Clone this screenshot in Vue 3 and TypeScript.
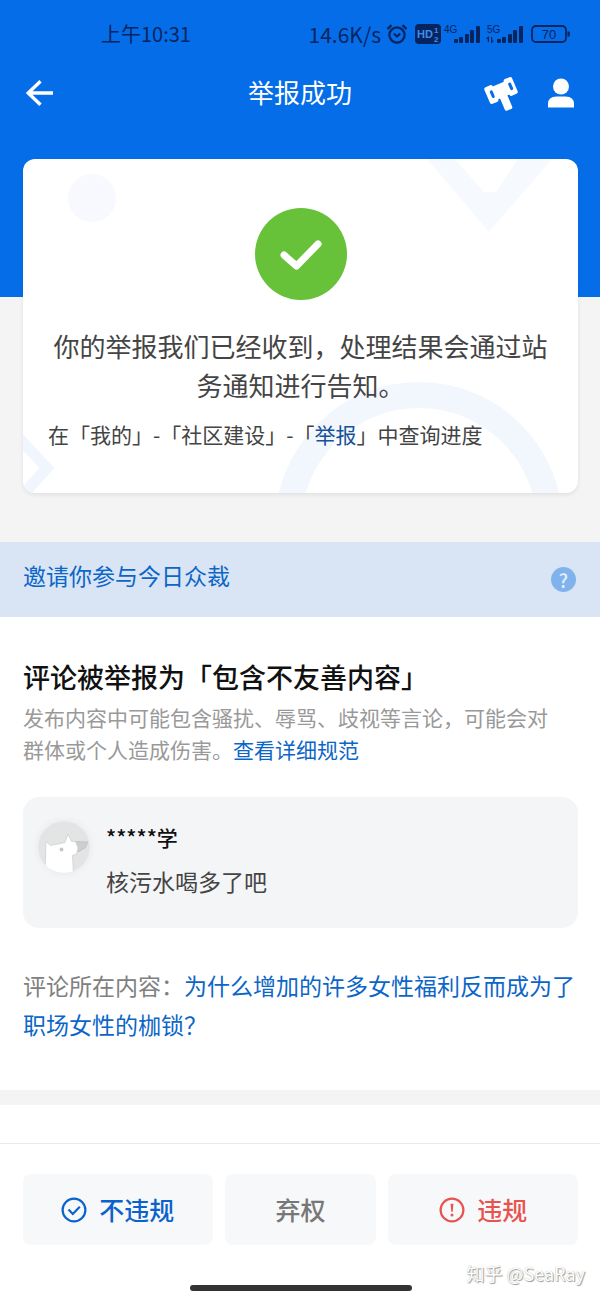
<script setup lang="ts">
const signals: { label: string; data: boolean }[] = [
  { label: '4G', data: false },
  { label: '5G', data: true },
]
</script>

<template>
  <div class="page">
    <section class="hero">
      <div class="status">
        <span class="time">上午10:31</span>
        <div class="indicators">
          <span class="speed">14.6K/s</span>
          <svg class="alarm" viewBox="0 0 22 22" width="22" height="22" fill="none" stroke="currentColor">
            <circle cx="11" cy="12" r="7.6" stroke-width="2.3" />
            <path d="M1.5 6 5.5 2.2M20.5 6 16.5 2.2" stroke-width="2.4" />
            <path d="M7.8 10.6 11 13.6 14.2 10.6" stroke-width="2" />
          </svg>
          <svg class="hd" viewBox="0 0 26 20" width="26" height="20">
            <rect x="0" y="0" width="26" height="20" rx="4" fill="currentColor" />
            <text x="2" y="14" font-size="11" font-weight="700" fill="#3f8df0">HD</text>
            <text x="19" y="9" font-size="8" font-weight="700" fill="#3f8df0">1</text>
            <text x="19" y="18" font-size="8" font-weight="700" fill="#3f8df0">2</text>
          </svg>
          <svg
            v-for="signal in signals"
            :key="signal.label"
            class="signal"
            viewBox="0 0 38 22"
            width="38"
            height="22"
            fill="currentColor"
          >
            <text x="1" y="10" font-size="10">{{ signal.label }}</text>
            <rect x="11" y="16" width="4" height="4" rx="1" />
            <rect x="16" y="14" width="4" height="6" rx="1" />
            <rect x="22" y="11" width="4" height="9" rx="1" />
            <rect x="27" y="7" width="4" height="13" rx="1" />
            <rect x="33" y="3" width="4" height="17" rx="1" />
            <path v-if="signal.data" d="M0 16 2.200 13.500H3V19H1.800V16ZM8 17.500 5.800 20H5V14H6.200V17.500Z" />
          </svg>
          <svg class="battery" viewBox="0 0 40 18" width="40" height="18">
            <rect x="1" y="1" width="34" height="16" rx="4" fill="none" stroke="currentColor" stroke-width="1.8" />
            <path d="M36.5 6.5h1.3q1 0 1 1v3q0 1-1 1h-1.3z" fill="currentColor" />
            <text x="18" y="13.5" font-size="13" text-anchor="middle" fill="currentColor">70</text>
          </svg>
        </div>
      </div>

      <header class="nav">
        <button class="icon-button" type="button" aria-label="返回">
          <svg viewBox="0 0 28 28" width="28" height="28" fill="none" stroke="#fff" stroke-width="3.400">
            <path d="M15.5 2.2 3.2 14 15.5 25.8M3.5 14H28" />
          </svg>
        </button>
        <h1>举报成功</h1>
        <div class="actions">
          <button class="icon-button" type="button" aria-label="众裁">
            <svg viewBox="0 0 36 36" width="36" height="36">
              <g transform="translate(17 15.5) rotate(-23)" fill="#fff">
                <rect x="-15" y="-9" width="9" height="18" rx="2" />
                <rect x="6" y="-9" width="9" height="18" rx="2" />
                <rect x="-8" y="-7" width="16" height="14" />
                <rect x="-4" y="4" width="8" height="17" rx="2" />
                <rect x="-11" y="-4" width="3" height="8" rx="1.500" fill="#056de8" />
                <rect x="9" y="-4" width="3" height="8" rx="1.500" fill="#056de8" />
              </g>
            </svg>
          </button>
          <button class="icon-button" type="button" aria-label="我的">
            <svg viewBox="0 0 28 30" width="28" height="30" fill="#fff">
              <circle cx="14" cy="8.5" r="8" />
              <path d="M1 29.5V26Q1 18.5 9.5 18.5H18.5Q27 18.5 27 26V29.5Z" />
            </svg>
          </button>
        </div>
      </header>

      <div class="card">
        <svg class="decor" viewBox="0 0 555 334" preserveAspectRatio="xMidYMid slice" fill="none" aria-hidden="true">
          <circle cx="69" cy="39" r="24" fill="#f8f9fe" />
          <path d="M404 0H432L461 33H473L495 0H529L466 73Z" fill="#f6f9fe" />
          <circle cx="396" cy="367" r="131" stroke="#f2f7fe" stroke-width="26" />
          <path d="M-6 277 24 309-2 338" stroke="#f0f5fe" stroke-width="11" />
        </svg>
        <svg class="success" viewBox="0 0 92 92" width="92" height="92" role="img" aria-label="成功">
          <circle cx="46" cy="46" r="46" fill="#67c23a" />
          <path d="M29 47 41.500 58 63 36" fill="none" stroke="#fff" stroke-width="7" stroke-linecap="round" stroke-linejoin="round" />
        </svg>
        <p class="result">你的举报我们已经收到，处理结果会通过站务通知进行告知。</p>
        <p class="track">在「我的」-「社区建设」-「<a href="#reports">举报</a>」中查询进度</p>
      </div>
    </section>

    <section class="banner">
      <h2>邀请你参与今日众裁</h2>
      <button class="help" type="button" aria-label="帮助">?</button>
    </section>

    <main class="case">
      <h2>评论被举报为「包含不友善内容」</h2>
      <p class="rule">
        发布内容中可能包含骚扰、辱骂、歧视等言论，可能会对群体或个人造成伤害。<a href="#rules">查看详细规范</a>
      </p>
      <article class="comment">
        <svg class="avatar" viewBox="0 0 52 52" width="52" height="52" aria-hidden="true">
          <defs>
            <clipPath id="avatar-clip"><circle cx="26" cy="26" r="26" /></clipPath>
          </defs>
          <g clip-path="url(#avatar-clip)">
            <rect width="52" height="52" fill="#e3e4e4" />
            <path d="M37 20.500 50 21 47 27 40 31Z" fill="#cdcfcf" stroke="#bfc1c1" stroke-width=".8" />
            <path
              d="M7 53 8 20.500 12.500 24.500 27 21.500 30 13 33.500 20.500H37.500L40 27 38.500 33 34.500 34.500 35.500 53Z"
              fill="#fff"
              stroke="#cfd1d1"
              stroke-width=".8"
            />
            <circle cx="23.500" cy="28.500" r="1.900" fill="#c4c6c6" />
          </g>
        </svg>
        <div>
          <strong>*****学</strong>
          <p>核污水喝多了吧</p>
        </div>
      </article>
      <p class="source">评论所在内容：<a href="#question">为什么增加的许多女性福利反而成为了职场女性的枷锁？</a></p>
    </main>

    <div class="divider"></div>

    <footer class="bottom">
      <div class="votes">
        <button class="vote ok" type="button">
          <svg viewBox="0 0 26 26" width="26" height="26" fill="none" stroke="currentColor" stroke-width="2.200">
            <circle cx="13" cy="13" r="11.400" />
            <path d="M7.500 12.500 11.800 17 18.800 9.800" />
          </svg>
          <span>不违规</span>
        </button>
        <button class="vote skip" type="button"><span>弃权</span></button>
        <button class="vote bad" type="button">
          <svg viewBox="0 0 26 26" width="26" height="26" fill="none" stroke="currentColor" stroke-width="2.200">
            <circle cx="13" cy="13" r="11.400" />
            <path d="M11.600 6.800h2.800l-.7 8h-1.400z" fill="currentColor" stroke="none" />
            <circle cx="13" cy="18" r="1.500" fill="currentColor" stroke="none" />
          </svg>
          <span>违规</span>
        </button>
      </div>
      <div class="watermark">知乎 @SeaRay</div>
      <div class="home-bar"></div>
    </footer>
  </div>
</template>

<style>
body {
  margin: 0;
  background: #fff;
}
</style>

<style scoped>
.page {
  font-family: "Noto Sans CJK SC", "Noto Sans", sans-serif;
  color: #444;
  background: #fff;
}
h1,
h2,
p {
  margin: 0;
  font-weight: 400;
}
a {
  color: #0c66c8;
  text-decoration: none;
}
button {
  border: 0;
  padding: 0;
  font-family: inherit;
  cursor: pointer;
}
.hero {
  padding-bottom: 49px;
  background: linear-gradient(#056de8, #056de8) top / 100% 297px no-repeat #f4f4f4;
}
.status {
  display: flex;
  align-items: center;
  justify-content: space-between;
  height: 40px;
  padding: 14px 29px 0 101px;
  color: #06255f;
}
.status svg {
  font-family: "Liberation Sans", Arial, sans-serif;
}
.time,
.speed {
  line-height: 40px;
}
.time {
  font-size: 20px;
}
.speed {
  margin-right: 5px;
  font-size: 21px;
}
.indicators {
  display: flex;
  align-items: center;
}
.hd {
  margin: 0 2px 0 7px;
}
.signal {
  margin-right: 5px;
}
.battery {
  margin-left: 2px;
}
.nav {
  display: grid;
  grid-template-columns: 1fr auto 1fr;
  align-items: center;
  height: 78px;
  padding: 0 25px;
}
.nav h1 {
  padding-bottom: 2px;
  color: #fff;
  font-size: 26px;
  line-height: 40px;
}
.icon-button {
  display: flex;
  background: none;
}
.actions {
  display: flex;
  align-items: center;
  justify-content: flex-end;
  gap: 27px;
}
.card {
  position: relative;
  display: flex;
  flex-direction: column;
  align-items: center;
  margin: 27px 22px 0 23px;
  padding: 49px 25px 43px;
  border-radius: 12px;
  background: #fff;
  box-shadow: 0 2px 4px rgba(0, 0, 0, 0.08);
  overflow: hidden;
}
.decor {
  position: absolute;
  inset: 0;
  width: 100%;
  height: 100%;
}
.success,
.result,
.track {
  position: relative;
}
.result {
  margin-top: 26px;
  font-size: 26px;
  line-height: 39px;
  text-align: center;
}
.track {
  align-self: stretch;
  margin-top: 14px;
  font-size: 21px;
  line-height: 32px;
}
.track a {
  color: #175199;
}
.banner {
  display: flex;
  align-items: center;
  justify-content: space-between;
  height: 75px;
  padding: 0 24px 0 23px;
  background: #d9e5f4;
}
.banner h2 {
  padding-bottom: 10px;
  color: #0c66c8;
  font-size: 23px;
  line-height: 34px;
}
.help {
  width: 25px;
  height: 25px;
  border-radius: 50%;
  background: #80b3ec;
  color: #e4effb;
  font-size: 19px;
  font-weight: 500;
  line-height: 25px;
}
.case {
  padding: 40px 22px 46px 23px;
}
.case h2 {
  color: #111;
  font-size: 27px;
  font-weight: 500;
  line-height: 40px;
}
.rule {
  margin-top: 4px;
  padding-right: 16px;
  color: #999;
  font-size: 21px;
  line-height: 32px;
}
.comment {
  display: flex;
  gap: 16px;
  margin-top: 32px;
  padding: 24px 15px 30px;
  border-radius: 16px;
  background: #f4f5f7;
}
.avatar {
  border-radius: 50%;
  box-shadow: 0 0 8px rgba(0, 0, 0, 0.06);
}
.comment strong {
  display: block;
  color: #111;
  font-size: 21px;
  font-weight: 500;
  line-height: 32px;
}
.comment p {
  margin-top: 11px;
  font-size: 23px;
  line-height: 34px;
}
.source {
  margin-top: 38px;
  color: #808080;
  font-size: 23px;
  line-height: 39px;
}
.divider {
  height: 15px;
  background: #f4f4f4;
}
.bottom {
  margin-top: 38px;
  padding: 30px 22px 9px 23px;
  border-top: 1px solid #e8e9eb;
}
.votes {
  display: grid;
  grid-template-columns: 5fr 4fr 5fr;
  gap: 12px;
}
.vote {
  display: flex;
  align-items: center;
  justify-content: center;
  gap: 12px;
  height: 71px;
  border-radius: 8px;
  background: #f7f8fa;
  font-size: 25px;
  font-weight: 500;
}
.vote span {
  padding-bottom: 2px;
}
.ok {
  color: #0c62cc;
}
.skip {
  color: #777;
}
.bad {
  color: #e8534f;
}
.watermark {
  margin: 14px -7px 0 0;
  color: #fff;
  font-size: 18px;
  line-height: 28px;
  text-align: right;
  text-shadow: 1px 1px 1px #999, 0 0 1px #aaa;
}
.home-bar {
  width: 40%;
  height: 6px;
  margin: -2px auto 0;
  border-radius: 3px;
  background: #333;
}
</style>
